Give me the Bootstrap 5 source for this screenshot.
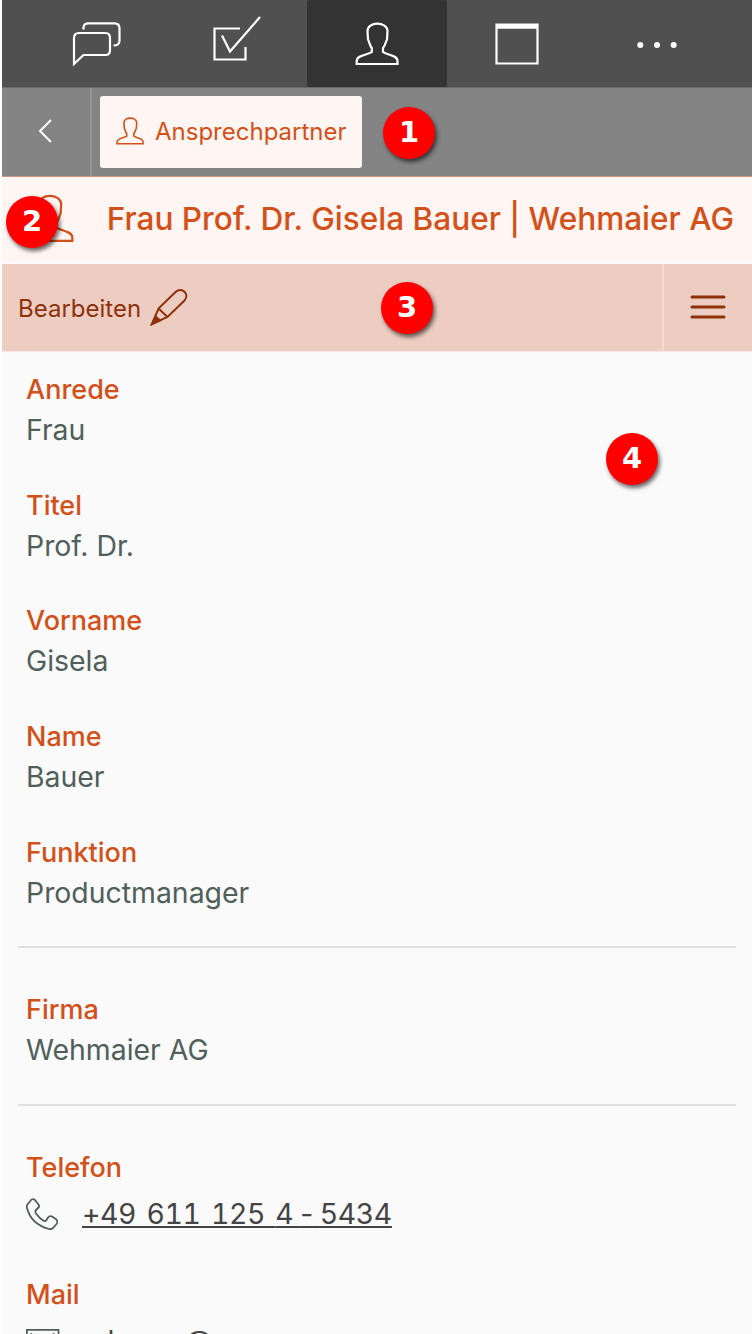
<!DOCTYPE html>
<html lang="de">
<head>
<meta charset="utf-8">
<meta name="viewport" content="width=device-width, initial-scale=1">
<title>Ansprechpartner</title>
<link rel="stylesheet" href="https://cdn.jsdelivr.net/npm/bootstrap@5.3.0/dist/css/bootstrap.min.css">
<style>
  html, body { height: 1334px; overflow: hidden; }
  body { font-family: Inter, "Liberation Sans", sans-serif; background: #fff; line-height: 1; }
  svg { display: block; flex: none; fill: none; stroke: currentColor; overflow: visible; }
  .app { margin-left: 2px; width: 750px; height: 1334px; background: #fafafa; overflow: hidden; }
  .topbar { height: 88px; background: #505050; border-bottom: 1px solid #686868; color: #fff; padding-left: 25px; }
  .topbar .nav-link { width: 140px; height: 87px; padding: 0; color: #fff; border-radius: 0; }
  .topbar .nav-link.active { background: #333; border-radius: 2px; }
  .crumbs { height: 89px; background: #848484; border-bottom: 1px solid #cf957f; }
  .back { width: 90px; border-right: 2px solid #979797; color: #fff; padding: 0 2px 2px 0; }
  .chip { width: 262px; height: 72px; margin: 8px 0 0 8px; background: #fff5f2; color: #d35019; border-radius: 3px; font-size: 24px; padding-left: 16px; gap: 11px; }
  .chip svg { margin-bottom: 2px; }
  .heading { height: 87px; background: #fff5f2; border-bottom: 2px solid #fffbfa; color: #d35019; }
  .heading svg { margin: 0 0 2px 23px; }
  .heading h1 { font-size: 31.55px; font-weight: 500; margin: 0 18px 2px auto; white-space: nowrap; }
  .tools { height: 88px; background: #edcdc1; border-bottom: 1px solid #f6e6df; color: #8e310c; font-size: 24px; }
  .tools span { padding-top: 2px; }
  .tools .pencil { margin: 0 0 2px 9px; }
  .burger { width: 90px; border-left: 2px solid #f4ddd5; padding: 0 1px 2px 0; }
  .num { position: absolute; width: 52px; height: 52px; border-radius: 50%; background: #f00; color: #fff; font: bold 29px/51px "DejaVu Sans", sans-serif; text-align: center; box-shadow: 2px 3px 4px rgba(0,0,0,.6); }
  .n1 { left: 383px; top: 107px; } .n2 { left: 6px; top: 196px; }
  .n3 { left: 381px; top: 282px; } .n4 { left: 606px; top: 433px; }
  dl { margin: 0; padding: 0 16px; }
  dt { font-size: 27px; font-weight: 500; line-height: 40px; color: #d35019; padding-left: 8px; }
  dd { font-size: 28.4px; line-height: 39.6px; color: #515f5b; margin: 0; padding-left: 8px; white-space: nowrap; }
  .field { height: 115.7px; padding-top: 18px; }
  .field.reach { height: 127px; }
  .reach dd { margin-top: 6px; }
  .line { margin: 16px 0 24px; border-top: 2px solid #e0e0e0; opacity: 1; }
  .contact { color: #444; text-decoration: underline; text-decoration-thickness: 2px; text-underline-offset: 2px; text-decoration-skip-ink: none; margin-left: 24px; }
  .phone { font-feature-settings: "tnum"; letter-spacing: -.35px; word-spacing: 3px; }
  .phone .ext { word-spacing: 0; }
  .phone .dash { font-feature-settings: normal; margin: 0 -.5px; }
</style>
<script src="https://cdn.jsdelivr.net/npm/bootstrap@5.3.0/dist/js/bootstrap.bundle.min.js"></script>
</head>
<body>
<svg class="d-none"><symbol id="person" viewBox="0 0 44 44"><path d="M1.700 42V39C1.700 33 13 33 16.800 30V26C14.500 23.500 14.500 20 13 17.500L12.500 9C12.500 4.500 17 1.700 22.300 1.700S32.500 4.500 32.500 9L32 17.500C30.500 20 30.500 23.500 28 26V30C31.500 33 42.500 33 42.500 39V42Z"/></symbol></svg>
<div class="app">
  <nav class="topbar nav flex-nowrap">
    <a class="nav-link d-flex align-items-center justify-content-center" href="#"><svg width="50" height="46" viewBox="0 0 50 46" stroke-width="2.200"><path d="M7 12H33.500Q38 12 38 17V29Q38 34 33.500 34H11.500L2 43V17Q2 12 7 12M11.500 8.500V7Q11.500 2.300 16.500 2.300H42.500Q47.500 2.300 47.500 7.300V19.500Q47.500 24.500 41.500 24.500"/></svg></a>
    <a class="nav-link d-flex align-items-center justify-content-center" href="#"><svg width="50" height="46" viewBox="0 0 50 46" stroke-width="2.200"><path d="M28 7.500H2.500V38.500H33.500V26M10 14.500L18 30.500L48-4"/></svg></a>
    <a class="nav-link active d-flex align-items-center justify-content-center" href="#"><svg width="44" height="44" stroke-width="2.200"><use href="#person"/></svg></a>
    <a class="nav-link d-flex align-items-center justify-content-center" href="#"><svg width="44" height="42" viewBox="0 0 44 42" stroke-width="2.200"><path d="M1.500 1.500H42.500V40.500H1.500Z"/><path d="M1 3.500H43" stroke-width="4.500"/></svg></a>
    <a class="nav-link d-flex align-items-center justify-content-center" href="#"><svg width="42" height="8" viewBox="0 0 42 8"><g fill="#fff" stroke="none"><circle cx="4.300" cy="5" r="3"/><circle cx="21" cy="5" r="3"/><circle cx="37.700" cy="5" r="3"/></g></svg></a>
  </nav>
  <div class="crumbs d-flex">
    <div class="back d-flex align-items-center justify-content-center"><svg width="14" height="26" viewBox="0 0 14 26" stroke-width="2"><path d="M13 2L2 13L13 24"/></svg></div>
    <div class="chip d-flex align-items-center"><svg width="28" height="28" stroke-width="2.500"><use href="#person"/></svg><span>Ansprechpartner</span></div>
  </div>
  <header class="heading d-flex align-items-center"><svg width="49" height="49" stroke-width="2"><use href="#person"/></svg><h1>Frau Prof. Dr. Gisela Bauer | Wehmaier AG</h1></header>
  <div class="tools d-flex">
    <div class="d-flex align-items-center ps-3 flex-grow-1"><span>Bearbeiten</span><svg class="pencil" width="38" height="38" viewBox="0 0 38 38" stroke-width="2"><path d="M2 36L8.500 20.500L25.500 4C32-1.500 40 6 34.500 12.500L17.500 29ZM8.500 20.500L17.500 29"/><path d="M2 36L5.500 28.500L10 32.500Z" fill="currentColor"/></svg></div>
    <div class="burger d-flex align-items-center justify-content-center"><svg width="36" height="26" viewBox="0 0 36 26" stroke-width="3" stroke-linecap="round"><path d="M2 3H34M2 13H34M2 23H34"/></svg></div>
  </div>
  <dl>
    <div class="field"><dt>Anrede</dt><dd>Frau</dd></div>
    <div class="field"><dt>Titel</dt><dd>Prof. Dr.</dd></div>
    <div class="field"><dt>Vorname</dt><dd>Gisela</dd></div>
    <div class="field"><dt>Name</dt><dd>Bauer</dd></div>
    <div class="field"><dt>Funktion</dt><dd>Productmanager</dd></div>
    <hr class="line">
    <div class="field"><dt>Firma</dt><dd>Wehmaier AG</dd></div>
    <hr class="line">
    <div class="field reach"><dt>Telefon</dt><dd class="d-flex align-items-center"><svg width="32" height="32" viewBox="0 0 32 32" stroke-width="1.800" stroke-linejoin="round"><path d="M1 7L5.500 1.500Q7.500 .5 9 2L12.500 6.500Q14 8.500 12 10L9.500 12.500Q9 14 10 15.500Q13.500 20.500 18 23Q19.500 23.500 20.500 22L22 19.500Q23.500 17.500 26 18.500L30.500 21.500Q32 23.500 31 25.500L27 30Q25.500 31.500 23 31Q5 26 1 10Q.5 8 1 7Z"/></svg><a class="contact phone" href="#">+49 611 125 <span class="ext">4 <span class="dash">-</span> 5434</span></a></dd></div>
    <div class="field reach"><dt>Mail</dt><dd class="d-flex"><svg class="mt-2" width="32" height="24" viewBox="0 0 32 24" stroke-width="1.800"><path d="M.9 .9H32.500V23H.9ZM4.500 4.500L16 14L28.500 4.500"/></svg><a class="contact" href="#">g.bauer@</a></dd></div>
  </dl>
</div>
<span class="num n1">1</span><span class="num n2">2</span><span class="num n3">3</span><span class="num n4">4</span>
</body>
</html>
